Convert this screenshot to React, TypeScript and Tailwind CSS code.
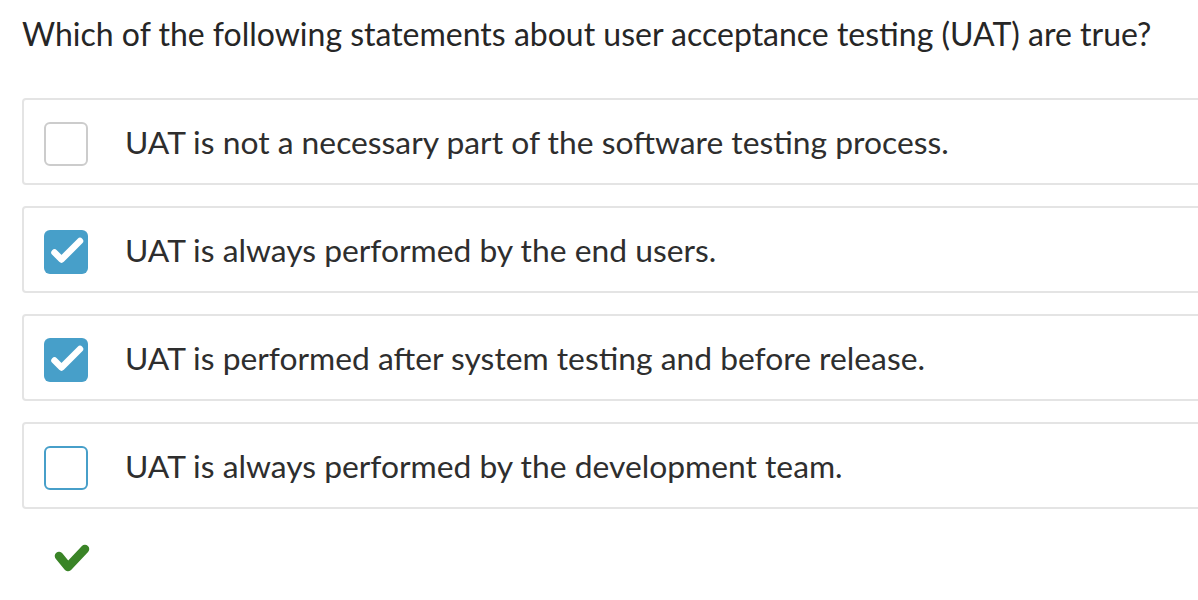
import React from "react";

type Opt = { text: string; state: "empty" | "checked" | "focus" };

const options: Opt[] = [
  { text: "UAT is not a necessary part of the software testing process.", state: "empty" },
  { text: "UAT is always performed by the end users.", state: "checked" },
  { text: "UAT is performed after system testing and before release.", state: "checked" },
  { text: "UAT is always performed by the development team.", state: "focus" },
];

function Box({ state }: { state: Opt["state"] }) {
  if (state === "checked") {
    return (
      <div className="mt-[5px] flex h-[44px] w-[44px] shrink-0 items-center justify-center rounded-[6px] bg-[#479fc9]">
        <svg width="44" height="44" viewBox="0 0 44 44">
          <path d="M10.5 22.5 L17.5 29.5 L36 11" fill="none" stroke="#ffffff" strokeWidth="6.5" strokeLinecap="round" strokeLinejoin="round" />
        </svg>
      </div>
    );
  }
  return (
    <div
      className={
        state === "focus"
          ? "mt-[5px] h-[44px] w-[44px] shrink-0 rounded-[6px] border-2 border-[#479fc9] bg-white"
          : "mt-[5px] h-[44px] w-[44px] shrink-0 rounded-[6px] border-2 border-[#cccccc] bg-white"
      }
    />
  );
}

export default function App() {
  return (
    <div className="h-[600px] w-[1198px] overflow-hidden bg-white text-[#333333]" style={{ fontFamily: "Lato, sans-serif" }}>
      <div className="pl-[22px] pt-[15px]">
        <h1 className="text-[32px] leading-[38px] font-normal text-[#262626]">
          Which of the following statements about user acceptance testing (UAT) are true?
        </h1>
        <div className="mt-[45px] flex flex-col gap-[21px]">
          {options.map((o) => (
            <div
              key={o.text}
              className="flex h-[87px] w-[1200px] items-center rounded-[4px] border-2 border-[#e4e4e4] pl-[20px]"
            >
              <Box state={o.state} />
              <span className="ml-[37px] text-[31.8px] leading-[38px] text-[#2e2e2e]">{o.text}</span>
            </div>
          ))}
        </div>
        <div className="mt-[34px] pl-[32px]">
          <svg width="40" height="32" viewBox="0 0 40 32">
            <path d="M5 13 L14 24 L31 6" fill="none" stroke="#3a8427" strokeWidth="8.5" strokeLinecap="round" strokeLinejoin="round" />
          </svg>
        </div>
      </div>
    </div>
  );
}
